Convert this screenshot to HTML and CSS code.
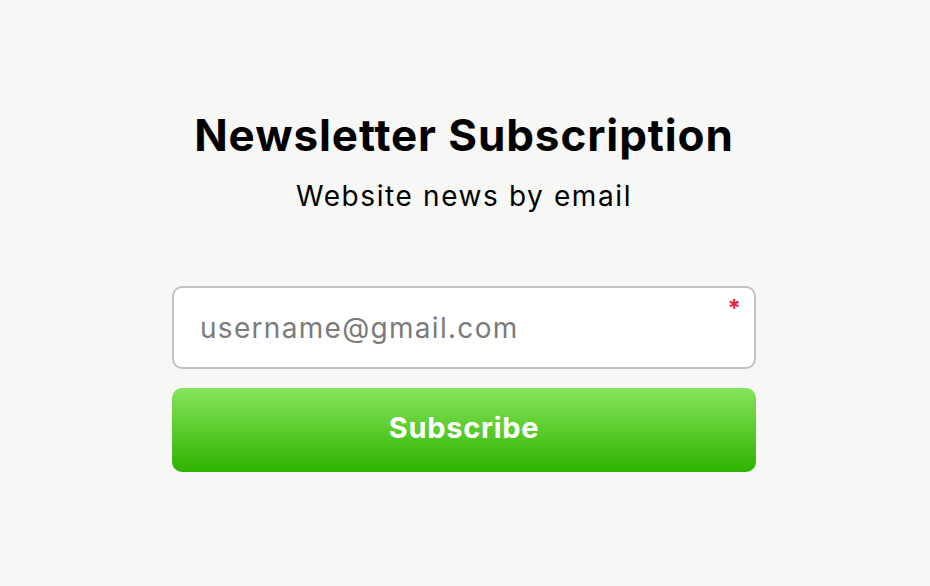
FILE: index.html
```html
<!DOCTYPE html>
<html>
<head>
<meta charset="utf-8">
<link rel="stylesheet" href="styles.css">
</head>
<body>
<main class="page">
  <section class="newsletter">
    <h1 class="title">Newsletter Subscription</h1>
    <p class="subtitle">Website news by email</p>
    <form class="form">
      <div class="field">
        <input class="email" type="email" placeholder="username@gmail.com">
        <span class="required">*</span>
      </div>
      <button class="submit" type="button">Subscribe</button>
    </form>
  </section>
</main>
</body>
</html>
```
FILE: styles.css
```css
html, body {
  margin: 0;
  padding: 0;
  background: #f7f7f5;
}
body {
  font-family: Inter, "Liberation Sans", sans-serif;
  width: 930px;
  height: 586px;
}
.page {
  display: flex;
  justify-content: center;
  padding-top: 108px;
  padding-right: 2px;
}
.newsletter {
  width: 584px;
  display: flex;
  flex-direction: column;
  align-items: center;
}
.title {
  margin: 0;
  font-size: 44px;
  font-weight: 700;
  line-height: 54px;
  letter-spacing: 0.9px;
  color: #000;
  white-space: nowrap;
}
.subtitle {
  margin: 17px 0 0;
  font-size: 28px;
  font-weight: 400;
  line-height: 34px;
  letter-spacing: 1.6px;
  color: #000;
}
.form {
  margin-top: 73px;
  width: 100%;
  display: flex;
  flex-direction: column;
  gap: 19px;
}
.field {
  position: relative;
}
.email {
  box-sizing: border-box;
  width: 100%;
  height: 83px;
  border: 2px solid #c2c2c2;
  border-radius: 10px;
  background: #fff;
  padding: 0 26px;
  font-family: inherit;
  font-size: 28px;
  letter-spacing: 1.3px;
  color: #000;
  outline: none;
}
.email::placeholder {
  color: #7b7b7b;
}
.required {
  position: absolute;
  top: 8px;
  right: 15px;
  color: #e3243b;
  font-size: 24px;
  font-weight: 700;
}
.submit {
  width: 100%;
  height: 84px;
  border: none;
  border-radius: 10px;
  background: linear-gradient(to bottom, #86e45b, #2fb300);
  color: #fff;
  font-family: inherit;
  font-size: 29px;
  font-weight: 700;
  letter-spacing: 0.7px;
  padding: 0 0 6px;
  cursor: pointer;
}
```
